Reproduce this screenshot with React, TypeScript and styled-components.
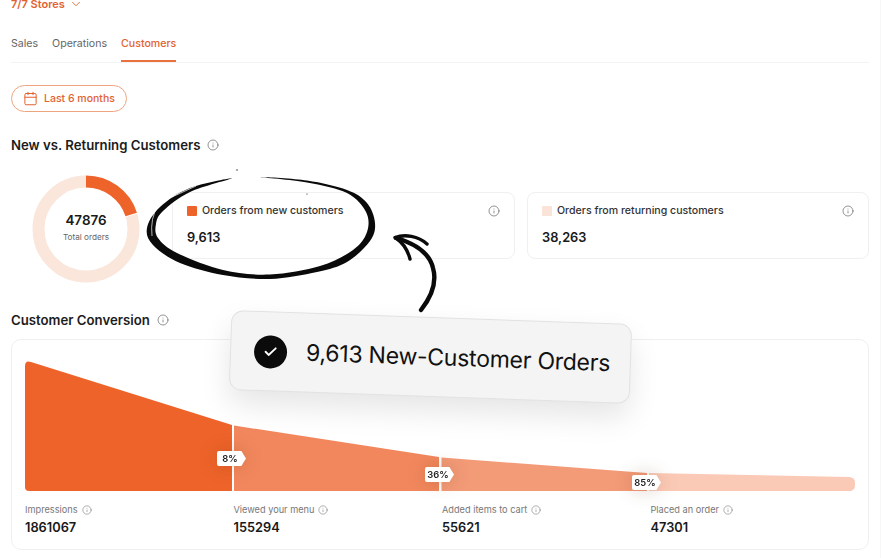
import styled, { createGlobalStyle } from "styled-components";
import { Calendar, Check, ChevronDown, Info } from "lucide-react";

const GlobalStyle = createGlobalStyle`
  html, body {
    margin: 0;
    background: #fff;
  }
  body {
    font-family: "Inter", "Liberation Sans", sans-serif;
    color: #191919;
    overflow: hidden;
  }
`;

const Page = styled.div`
  position: relative;
  width: 881px;
  height: 558px;
  padding: 0 11px 0 11px;
  box-sizing: border-box;
  border-right: 1px solid #f7f7f7;
  overflow: hidden;
`;

const StorePicker = styled.div`
  display: flex;
  align-items: center;
  gap: 4px;
  height: 16px;
  margin-top: -4px;
  font-size: 11px;
  font-weight: 600;
  color: #e2622f;
`;

const Tabs = styled.div`
  display: flex;
  gap: 14px;
  margin-top: 23px;
  height: 27px;
  border-bottom: 1px solid #f3f3f3;
`;

const Tab = styled.div<{ $active?: boolean }>`
  height: 27px;
  box-sizing: border-box;
  padding-top: 2px;
  font-size: 10.6px;
  line-height: 14px;
  font-weight: ${(p) => (p.$active ? 500 : 400)};
  color: ${(p) => (p.$active ? "#e2622f" : "#666")};
  border-bottom: ${(p) => (p.$active ? "2px solid #e8723f" : "none")};
`;

const RangeButton = styled.div`
  display: inline-flex;
  align-items: center;
  gap: 6px;
  width: 116px;
  height: 27px;
  box-sizing: border-box;
  margin-top: 22px;
  padding-left: 11px;
  border: 1px solid #eda47f;
  border-radius: 14px;
  font-size: 10.5px;
  font-weight: 500;
  color: #e2622f;
`;

const SectionTitle = styled.div<{ $top: number }>`
  display: flex;
  align-items: center;
  gap: 7px;
  height: 18px;
  margin-top: ${(p) => p.$top}px;
  font-size: 13.2px;
  font-weight: 600;
  color: #1c1c1c;
`;

const SummaryRow = styled.div`
  display: flex;
  align-items: center;
  margin-top: 20px;
  height: 108px;
`;

const Donut = styled.div`
  position: relative;
  width: 108px;
  height: 108px;
  margin-top: 2px;
  margin-left: 21px;
  margin-right: 32px;
  flex: none;
`;

const DonutCenter = styled.div`
  position: absolute;
  inset: 0;
  padding-bottom: 6px;
  box-sizing: border-box;
  display: flex;
  flex-direction: column;
  align-items: center;
  justify-content: center;
`;

const DonutValue = styled.div`
  font-size: 13.4px;
  line-height: 18px;
  font-weight: 600;
`;

const DonutLabel = styled.div`
  margin-top: 3px;
  font-size: 8.2px;
  line-height: 10px;
  color: #666;
`;

const Cards = styled.div`
  display: grid;
  grid-template-columns: 343px 342px;
  gap: 12px;
  margin-top: -5px;
`;

const Card = styled.div`
  height: 67px;
  box-sizing: border-box;
  padding: 11px 14px 0;
  border: 1px solid #f0f0f0;
  border-radius: 8px;
`;

const CardHead = styled.div`
  display: flex;
  align-items: center;
  gap: 5px;
  height: 13px;
  font-size: 10.6px;
  font-weight: 500;
  color: #333;
`;

const Swatch = styled.span<{ $color: string }>`
  width: 10px;
  height: 10px;
  border-radius: 1px;
  background: ${(p) => p.$color};
`;

const InfoSlot = styled.span`
  display: flex;
  margin-left: auto;
`;

const CardValue = styled.div`
  margin-top: 13px;
  font-size: 12.8px;
  line-height: 16px;
  font-weight: 600;
`;

const FunnelCard = styled.div`
  position: relative;
  height: 211px;
  box-sizing: border-box;
  margin-top: 10px;
  padding: 21px 13px 0;
  border: 1px solid #f0f0f0;
  border-radius: 10px;
`;

const FunnelChart = styled.svg`
  display: block;
  width: 830px;
  height: 131px;
`;

const Badge = styled.div<{ $left: number; $top: number }>`
  position: absolute;
  left: ${(p) => p.$left}px;
  top: ${(p) => p.$top}px;
  filter: drop-shadow(0 0 9px rgba(90, 40, 10, 0.22));
`;

const BadgeShape = styled.div`
  width: 29px;
  height: 15px;
  box-sizing: border-box;
  padding-right: 3px;
  background: #fff;
  clip-path: polygon(0 0, 84% 0, 100% 50%, 84% 100%, 0 100%);
  border-radius: 2px;
  font-size: 9.4px;
  font-weight: 600;
  line-height: 15px;
  text-align: center;
  color: #222;
`;

const Steps = styled.div`
  display: grid;
  grid-template-columns: 208.5px 208.5px 208.5px 1fr;
  margin-top: 11px;
`;

const StepLabel = styled.div`
  display: flex;
  align-items: center;
  gap: 4px;
  height: 13px;
  font-size: 9.2px;
  color: #777;
`;

const StepValue = styled.div`
  margin-top: 4px;
  font-size: 12.8px;
  line-height: 16px;
  font-weight: 600;
`;

const Scribble = styled.svg`
  position: absolute;
  left: 0;
  top: 0;
  width: 881px;
  height: 558px;
  pointer-events: none;
`;

const Callout = styled.div`
  position: absolute;
  left: 230px;
  top: 317px;
  width: 401px;
  height: 80px;
  box-sizing: border-box;
  display: flex;
  align-items: center;
  gap: 19px;
  padding: 0 0 0 23px;
  background: #f4f4f4;
  border: 1px solid #e2e2e2;
  border-radius: 12px;
  box-shadow: 0 14px 30px rgba(0, 0, 0, 0.1);
  transform: rotate(2deg);
`;

const CheckDot = styled.div`
  display: flex;
  align-items: center;
  justify-content: center;
  width: 33px;
  height: 33px;
  border-radius: 50%;
  background: #0b0b0b;
  color: #fff;
  flex: none;
`;

const CalloutText = styled.div`
  font-size: 23px;
  font-weight: 400;
  letter-spacing: -0.24px;
  white-space: nowrap;
  color: #111;
`;

const steps = [
  { label: "Impressions", value: "1861067" },
  { label: "Viewed your menu", value: "155294" },
  { label: "Added items to cart", value: "55621" },
  { label: "Placed an order", value: "47301" },
];

const badges = [
  { text: "8%", left: 205, top: 111 },
  { text: "36%", left: 413, top: 127 },
  { text: "85%", left: 620, top: 135 },
];

// closed catmull-rom through hand picked points, for the brush outline
function smooth(points: number[][]) {
  const n = points.length;
  let d = `M${points[0][0]} ${points[0][1]}`;
  for (let i = 0; i < n; i++) {
    const p0 = points[(i - 1 + n) % n];
    const p1 = points[i];
    const p2 = points[(i + 1) % n];
    const p3 = points[(i + 2) % n];
    const c1x = p1[0] + (p2[0] - p0[0]) / 6;
    const c1y = p1[1] + (p2[1] - p0[1]) / 6;
    const c2x = p2[0] - (p3[0] - p1[0]) / 6;
    const c2y = p2[1] - (p3[1] - p1[1]) / 6;
    d += `C${c1x} ${c1y} ${c2x} ${c2y} ${p2[0]} ${p2[1]}`;
  }
  return d + "Z";
}

const brush = smooth([
  [232, 178.3], [190, 188], [160, 207], [147, 228], [153, 245], [180, 263], [223, 275],
  [270, 279], [317, 272], [347, 262], [370, 241], [375, 223], [367, 203], [347, 190],
  [307, 180.5], [260, 177], [307, 182.5], [347, 193], [366, 212], [367, 232], [353, 250],
  [320, 266], [270, 274.5], [223, 270], [177, 253], [158, 238], [156, 224], [163, 211], [190, 192],
]);

function App() {
  const r = 47.5;
  const c = 2 * Math.PI * r;
  return (
    <Page>
      <GlobalStyle />
      <StorePicker>
        7/7 Stores
        <ChevronDown size={14} strokeWidth={1.5} />
      </StorePicker>
      <Tabs>
        <Tab>Sales</Tab>
        <Tab>Operations</Tab>
        <Tab $active>Customers</Tab>
      </Tabs>
      <RangeButton>
        <Calendar size={15} strokeWidth={1.6} />
        Last 6 months
      </RangeButton>
      <SectionTitle $top={24}>
        New vs. Returning Customers
        <Info size={12} strokeWidth={1.4} color="#666" />
      </SectionTitle>
      <SummaryRow>
        <Donut>
          <svg width="108" height="108" viewBox="0 0 108 108">
            <circle cx="54" cy="54" r={r} fill="none" stroke="#fae6da" strokeWidth="12" />
            <circle
              cx="54"
              cy="54"
              r={r}
              fill="none"
              stroke="#ffffff"
              strokeWidth="13"
              strokeDasharray={`${c * 0.206} ${c}`}
              strokeDashoffset={c * 0.003}
              transform="rotate(-90 54 54)"
            />
            <circle
              cx="54"
              cy="54"
              r={r}
              fill="none"
              stroke="#ee6329"
              strokeWidth="12"
              strokeDasharray={`${c * 0.2} ${c}`}
              transform="rotate(-90 54 54)"
            />
          </svg>
          <DonutCenter>
            <DonutValue>47876</DonutValue>
            <DonutLabel>Total orders</DonutLabel>
          </DonutCenter>
        </Donut>
        <Cards>
          <Card>
            <CardHead>
              <Swatch $color="#ee6329" />
              Orders from new customers
              <InfoSlot>
                <Info size={12} strokeWidth={1.4} color="#666" />
              </InfoSlot>
            </CardHead>
            <CardValue>9,613</CardValue>
          </Card>
          <Card>
            <CardHead>
              <Swatch $color="#fae3d7" />
              Orders from returning customers
              <InfoSlot>
                <Info size={12} strokeWidth={1.4} color="#666" />
              </InfoSlot>
            </CardHead>
            <CardValue>38,263</CardValue>
          </Card>
        </Cards>
      </SummaryRow>
      <SectionTitle $top={29}>
        Customer Conversion
        <Info size={12} strokeWidth={1.4} color="#666" />
      </SectionTitle>
      <FunnelCard>
        <FunnelChart viewBox="25 361 830 131">
          <path d="M25 366 Q25 360 31 362 L232 425 V491 H29 Q25 491 25 487 Z" fill="#ee6329" />
          <path d="M234 425.5 L439 457 V491 H234 Z" fill="#f2875d" />
          <path d="M441.5 457.5 L647 473 V491 H441.5 Z" fill="#f39a77" />
          <path d="M649 473 L849 477 Q855 477 855 483 V485 Q855 491 849 491 H649 Z" fill="#fbcab6" />
        </FunnelChart>
        {badges.map((b) => (
          <Badge key={b.text} $left={b.left} $top={b.top}>
            <BadgeShape>{b.text}</BadgeShape>
          </Badge>
        ))}
        <Steps>
          {steps.map((s) => (
            <div key={s.label}>
              <StepLabel>
                {s.label}
                <Info size={10} strokeWidth={1.4} color="#777" />
              </StepLabel>
              <StepValue>{s.value}</StepValue>
            </div>
          ))}
        </Steps>
      </FunnelCard>
      <Scribble viewBox="0 0 881 558">
        <path d={brush} fill="#0a0a0a" fillRule="evenodd" />
        <path d="M158 206 Q150 218 152 236 M172 197 L196 186" fill="none" stroke="#ffffff" strokeWidth="0.7" />
        <circle cx="237" cy="170" r="0.7" fill="#111" />
        <circle cx="307" cy="194" r="0.6" fill="#111" />
        <path
          d="M421 310 C432 296 437 282 433 268 C430 255 420 245 396 238"
          fill="none"
          stroke="#0a0a0a"
          strokeWidth="4.4"
          strokeLinecap="round"
        />
        <path
          d="M395 237.5 C405 234 418 236 427 244 M396 238 C403 243 408 251 410 259"
          fill="none"
          stroke="#0a0a0a"
          strokeWidth="3.4"
          strokeLinecap="round"
        />
      </Scribble>
      <Callout>
        <CheckDot>
          <Check size={15} strokeWidth={3} />
        </CheckDot>
        <CalloutText>9,613 New-Customer Orders</CalloutText>
      </Callout>
    </Page>
  );
}

export default App;
